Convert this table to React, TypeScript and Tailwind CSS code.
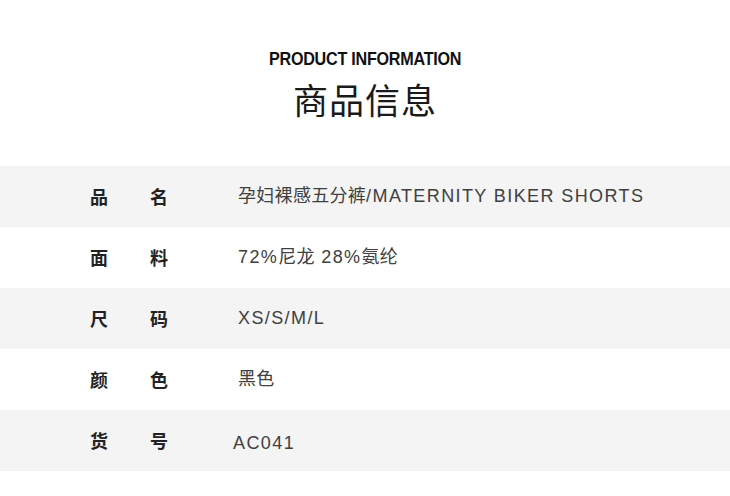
import React from 'react';

const rows = [
    { a: '品', b: '名', value: '孕妇裸感五分裤/MATERNITY BIKER SHORTS', shade: true },
    { a: '面', b: '料', value: '72%尼龙 28%氨纶', shade: false },
    { a: '尺', b: '码', value: 'XS/S/M/L', shade: true },
    { a: '颜', b: '色', value: '黑色', shade: false },
    { a: '货', b: '号', value: 'AC041', shade: true },
];

// latin runs get a little extra spacing, CJK stays tight
const Value: React.FC<{ text: string }> = ({ text }) => {
    const parts = text.match(/[\u4e00-\u9fff]+|[^\u4e00-\u9fff]+/g) || [];
    return (
        <>
            {parts.map((p, i) =>
                /[\u4e00-\u9fff]/.test(p) ? (
                    <span key={i} className="tracking-[0.3px]">{p}</span>
                ) : (
                    <span key={i} className="tracking-[1.4px]">{p}</span>
                )
            )}
        </>
    );
};

export default function App() {
    return (
        <div className="w-[730px] h-[496px] bg-white overflow-hidden font-['Liberation_Sans','Noto_Sans_CJK_SC',sans-serif]">
            <div className="pt-[47px] flex flex-col items-center">
                <h1 className="text-[19px] leading-[24px] font-bold text-[#111] tracking-[-0.3px] scale-x-[0.85]">
                    PRODUCT INFORMATION
                </h1>
                <h2 className="mt-[6px] text-[35px] leading-[44px] text-[#1a1a1a] font-['Noto_Sans_CJK_SC',sans-serif] tracking-[1px]">
                    商品信息
                </h2>
            </div>
            <div className="mt-[45px] flex flex-col">
                {rows.map((r, i) => (
                    <div
                        key={i}
                        className={`h-[61px] flex items-center ${r.shade ? 'bg-[#f4f4f4]' : 'bg-white'}`}
                    >
                        <div className="w-[238px] flex items-center pl-[90px] text-[18px] font-bold text-[#222] font-['Noto_Sans_CJK_SC',sans-serif]">
                            <span className="w-[60px]">{r.a}</span>
                            <span>{r.b}</span>
                        </div>
                        <div className={`text-[18px] text-[#404040] whitespace-nowrap ${i === 4 ? '-ml-[5px] mt-[6px]' : ''}`}>
                            <Value text={r.value} />
                        </div>
                    </div>
                ))}
            </div>
        </div>
    );
}
